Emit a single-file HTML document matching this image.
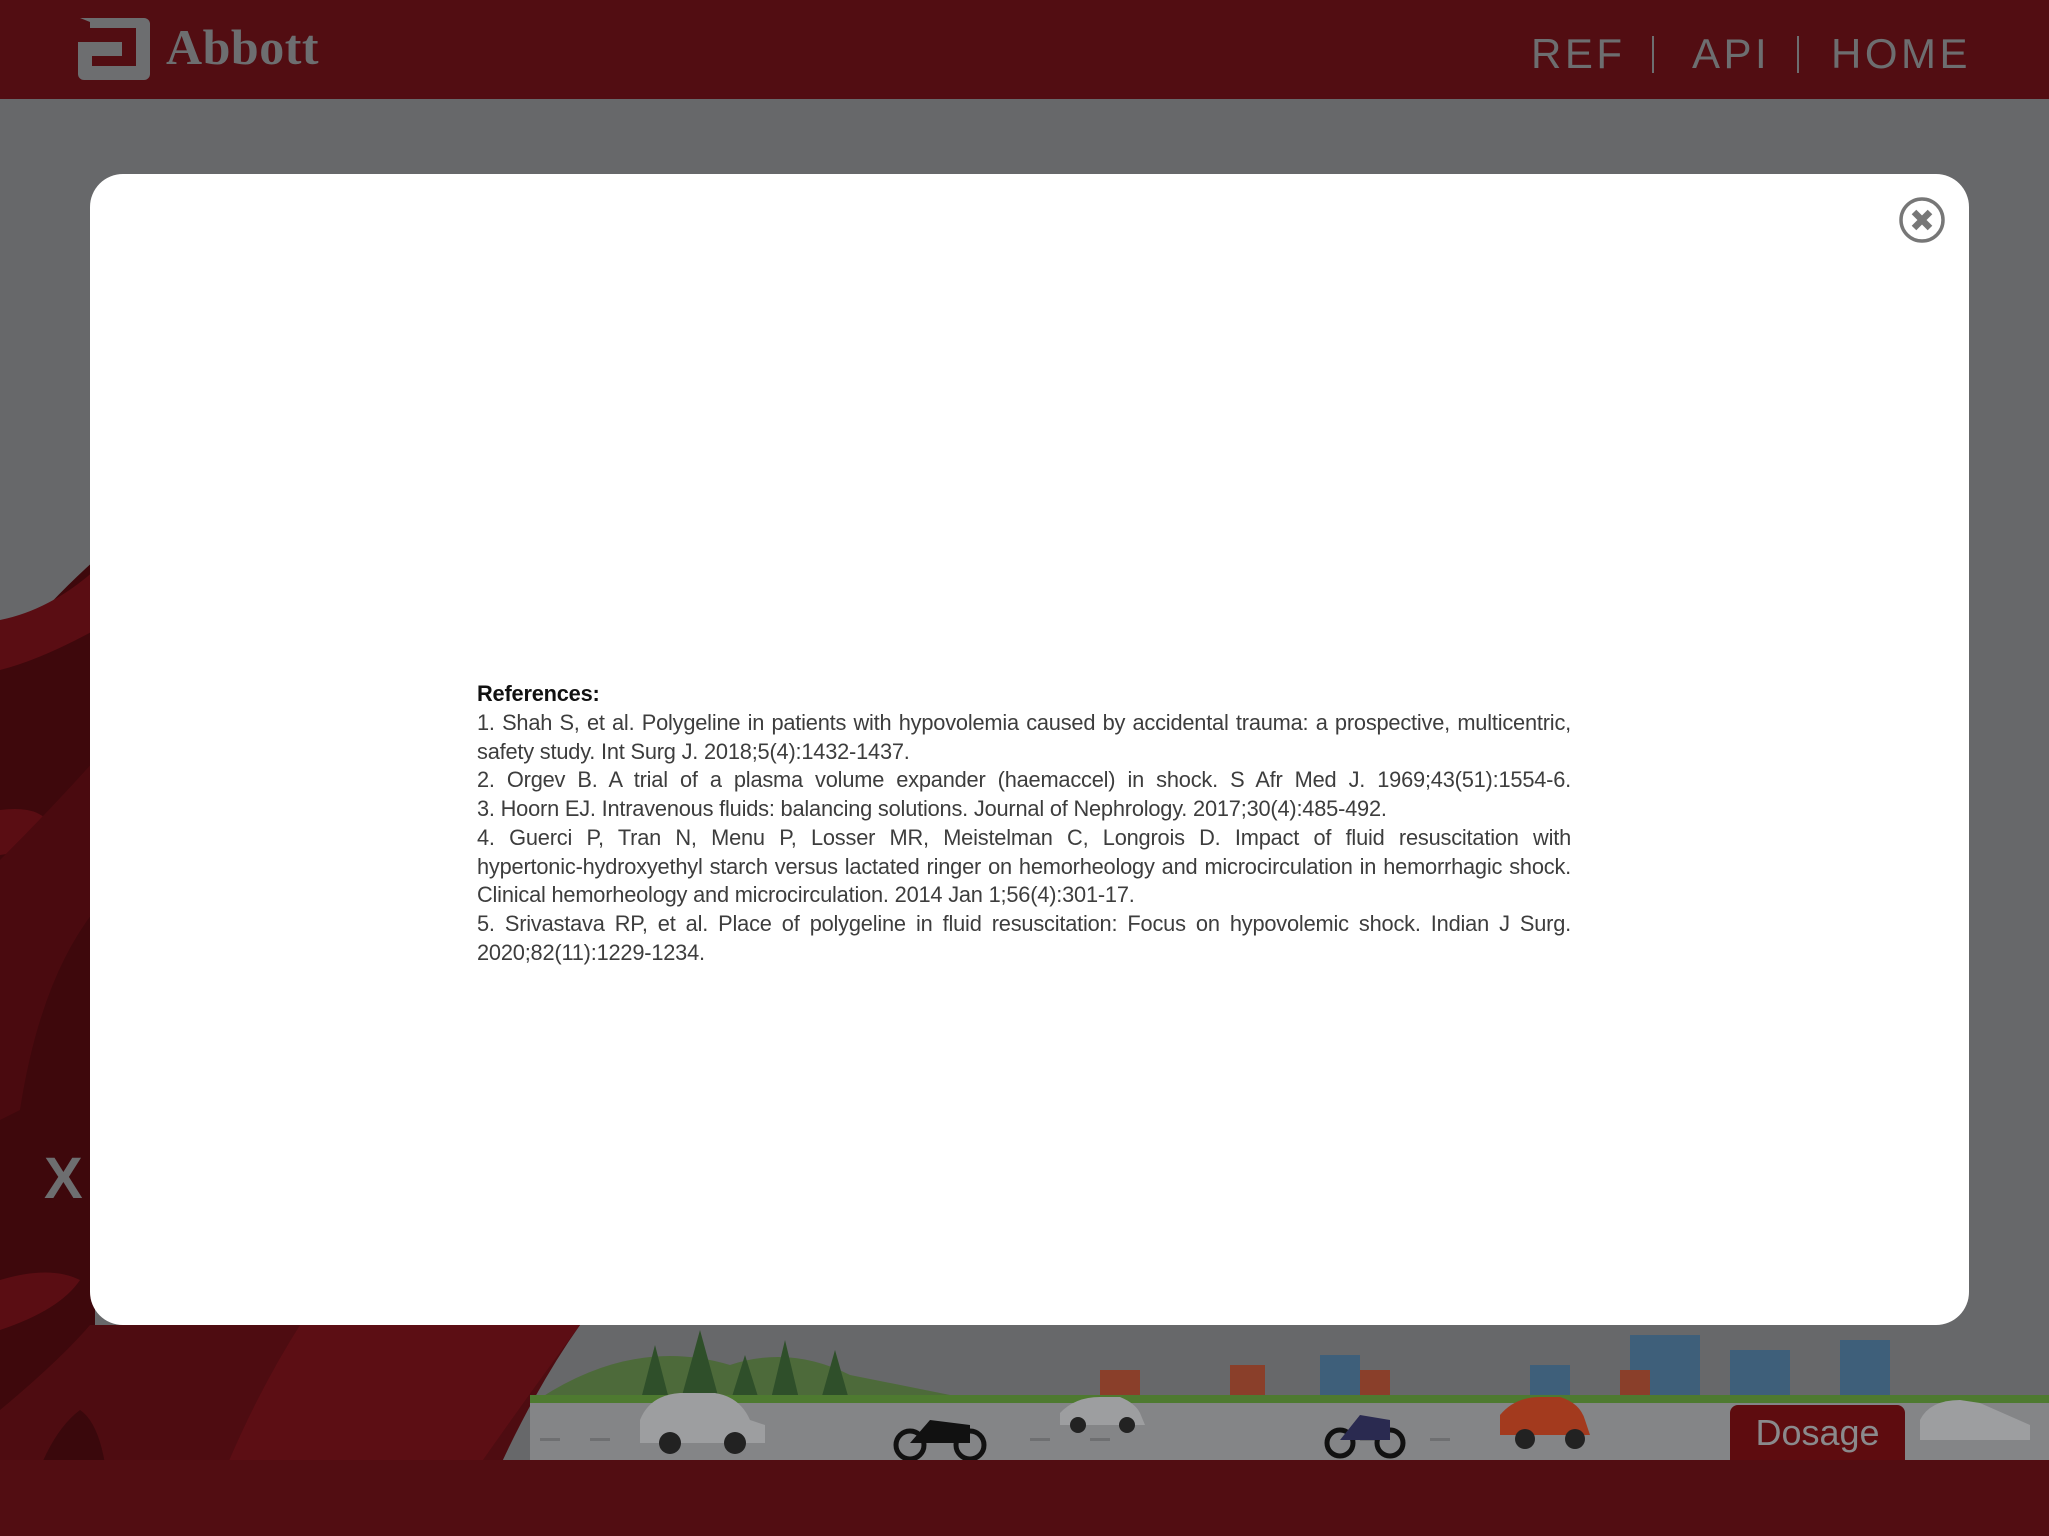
<!DOCTYPE html>
<html><head><meta charset="utf-8">
<style>
html,body{margin:0;padding:0}
body{width:2049px;height:1536px;position:relative;overflow:hidden;background:#67686a;font-family:"Liberation Sans",sans-serif}
.hdr{position:absolute;left:0;top:0;width:2049px;height:99px;background:#520d12}
.abbott{position:absolute;left:166px;top:18px;font-family:"Liberation Serif",serif;font-weight:bold;font-size:50px;color:#6d6e70;letter-spacing:0.5px}
.nav{position:absolute;top:30px;font-size:42px;color:#6d6e70;letter-spacing:3.5px;line-height:48px}
.sep{position:absolute;top:36px;width:2px;height:37px;background:#6d6e70}
.modal{position:absolute;left:90px;top:174px;width:1879px;height:1151px;background:#fff;border-radius:33px}
.refs{position:absolute;left:477px;top:680px;width:1094px;font-size:21.8px;line-height:28.75px;color:#3d3d3d;text-align:justify;letter-spacing:-0.2px}
.refs b{color:#111}
.refs p{margin:0;text-align:justify}
.bot{position:absolute;left:0;top:1460px;width:2049px;height:76px;background:#520d12}
.dosage{position:absolute;left:1730px;top:1405px;width:175px;height:55px;background:#5e0c0f;border-radius:8px 8px 0 0;color:#8a8a8c;font-size:36px;text-align:center;line-height:56px}
</style></head><body>
<div class="hdr">
<svg style="position:absolute;left:76px;top:18px" width="76" height="62" viewBox="0 0 76 62">
<path d="M4 0 H68 a6 6 0 0 1 6 6 V56 a6 6 0 0 1 -6 6 H8 a6 6 0 0 1 -6 -6 V24 H56 V48 H16 V38 H46 V34 H14 V4 Z" fill="#6d6e70"/>
<path d="M14 10 H60 V48 H16 V38 H46 V24 H14 Z" fill="#520d12"/>
</svg>
<div class="abbott">Abbott</div>
<div class="nav" style="left:1531px">REF</div>
<div class="sep" style="left:1652px"></div>
<div class="nav" style="left:1692px">API</div>
<div class="sep" style="left:1797px"></div>
<div class="nav" style="left:1831px">HOME</div>
</div>

<svg style="position:absolute;left:0;top:560px" width="600" height="976" viewBox="0 0 600 976">
<path d="M0 100 Q50 40 95 0 L95 976 L0 976 Z" fill="#3e080c"/>
<path d="M0 60 Q50 50 95 10 L95 70 Q40 100 0 110 Z" fill="#5a0d13"/>
<path d="M0 250 Q40 245 50 265 Q40 290 0 295 Z" fill="#5a0d13"/>
<path d="M95 350 Q40 420 20 550 L0 560 L0 300 Q50 250 95 200Z" fill="#4a0a0f"/>
<path d="M0 720 Q50 705 80 720 Q60 750 0 770 Z" fill="#5a0d13"/>
<path d="M90 765 L580 765 Q520 850 470 976 L0 976 L0 850 Q60 800 90 765 Z" fill="#4e0c11"/>
<path d="M300 765 L580 765 Q510 860 430 976 L200 976 Q240 860 300 765Z" fill="#5c0e14"/>
<path d="M20 976 Q40 880 80 850 Q110 870 110 976Z" fill="#3a080c"/>
</svg>

<svg style="position:absolute;left:530px;top:1325px" width="1519" height="135" viewBox="0 0 1519 135">
<path d="M0 80 Q100 10 200 40 Q260 20 320 50 L420 70 L1519 70 L1519 120 L0 120Z" fill="#4d6a3a"/>
<g fill="#2f4f2a"><path d="M110 78 L125 20 L140 78Z"/><path d="M150 78 L170 5 L190 78Z"/><path d="M200 78 L215 30 L230 78Z"/><path d="M240 78 L255 15 L270 78Z"/><path d="M290 78 L305 25 L320 78Z"/></g>
<g fill="#3e5f7a"><rect x="790" y="30" width="40" height="45"/><rect x="1100" y="10" width="70" height="65"/><rect x="1200" y="25" width="60" height="50"/><rect x="1310" y="15" width="50" height="60"/><rect x="1000" y="40" width="40" height="35"/></g>
<g fill="#8a3f2a"><rect x="570" y="45" width="40" height="30"/><rect x="700" y="40" width="35" height="35"/><rect x="830" y="45" width="30" height="30"/><rect x="1090" y="45" width="30" height="30"/></g>
<rect x="0" y="70" width="1519" height="8" fill="#4e7a30"/>
<rect x="0" y="78" width="1519" height="57" fill="#848587"/>
<g fill="#6e6f71"><rect x="10" y="113" width="20" height="3"/><rect x="60" y="113" width="20" height="3"/><rect x="500" y="113" width="20" height="3"/><rect x="560" y="113" width="20" height="3"/><rect x="830" y="113" width="20" height="3"/><rect x="900" y="113" width="20" height="3"/></g>
<path d="M110 95 Q120 70 150 68 L185 68 Q210 72 220 95 L235 100 L235 118 L110 118Z" fill="#9d9ea0"/>
<circle cx="140" cy="118" r="11" fill="#222"/><circle cx="205" cy="118" r="11" fill="#222"/>
<path d="M530 88 Q545 72 570 72 L590 72 Q605 78 610 88 L615 100 L530 100Z" fill="#9d9ea0"/>
<circle cx="548" cy="100" r="8" fill="#222"/><circle cx="597" cy="100" r="8" fill="#222"/>
<path d="M970 90 Q985 72 1010 72 L1030 72 Q1050 78 1055 95 L1060 110 L970 110Z" fill="#a33a1e"/>
<circle cx="995" cy="114" r="10" fill="#222"/><circle cx="1045" cy="114" r="10" fill="#222"/>
<circle cx="380" cy="120" r="14" fill="none" stroke="#111" stroke-width="5"/><circle cx="440" cy="120" r="14" fill="none" stroke="#111" stroke-width="5"/><path d="M380 118 L400 95 L440 100 L440 118Z" fill="#111"/>
<circle cx="810" cy="118" r="13" fill="none" stroke="#111" stroke-width="5"/><circle cx="860" cy="118" r="13" fill="none" stroke="#111" stroke-width="5"/><path d="M810 115 L830 90 L860 95 L860 115Z" fill="#2a2a50"/>
<path d="M1390 95 Q1400 75 1430 75 L1450 78 L1500 100 L1500 115 L1390 115Z" fill="#9d9ea0"/>
</svg>

<div class="bot"></div>
<div style="position:absolute;left:44px;top:1145px;font-size:58px;font-weight:bold;color:#6d6e70">X</div>

<div class="modal">
<svg style="position:absolute;left:1808px;top:22px" width="48" height="48" viewBox="0 0 48 48">
<circle cx="24" cy="24" r="21" fill="none" stroke="#777" stroke-width="3.5"/>
<path d="M16 16 L32 32 M32 16 L16 32" stroke="#777" stroke-width="6.5"/>
</svg>
</div>
<div class="refs">
<b>References:</b><br>
<p>1. Shah S, et al. Polygeline in patients with hypovolemia caused by accidental trauma: a prospective, multicentric, safety study. Int Surg J. 2018;5(4):1432-1437.</p>
<p style="text-align-last:justify">2. Orgev B. A trial of a plasma volume expander (haemaccel) in shock. S Afr Med J. 1969;43(51):1554-6.</p>
<p>3. Hoorn EJ. Intravenous fluids: balancing solutions. Journal of Nephrology. 2017;30(4):485-492.</p>
<p>4. Guerci P, Tran N, Menu P, Losser MR, Meistelman C, Longrois D. Impact of fluid resuscitation with hypertonic&#8209;hydroxyethyl starch versus lactated ringer on hemorheology and microcirculation in hemorrhagic shock. Clinical hemorheology and microcirculation. 2014 Jan 1;56(4):301-17.</p>
<p>5. Srivastava RP, et al. Place of polygeline in fluid resuscitation: Focus on hypovolemic shock. Indian J Surg. 2020;82(11):1229-1234.</p>
</div>
<div class="dosage">Dosage</div>
</body></html>
